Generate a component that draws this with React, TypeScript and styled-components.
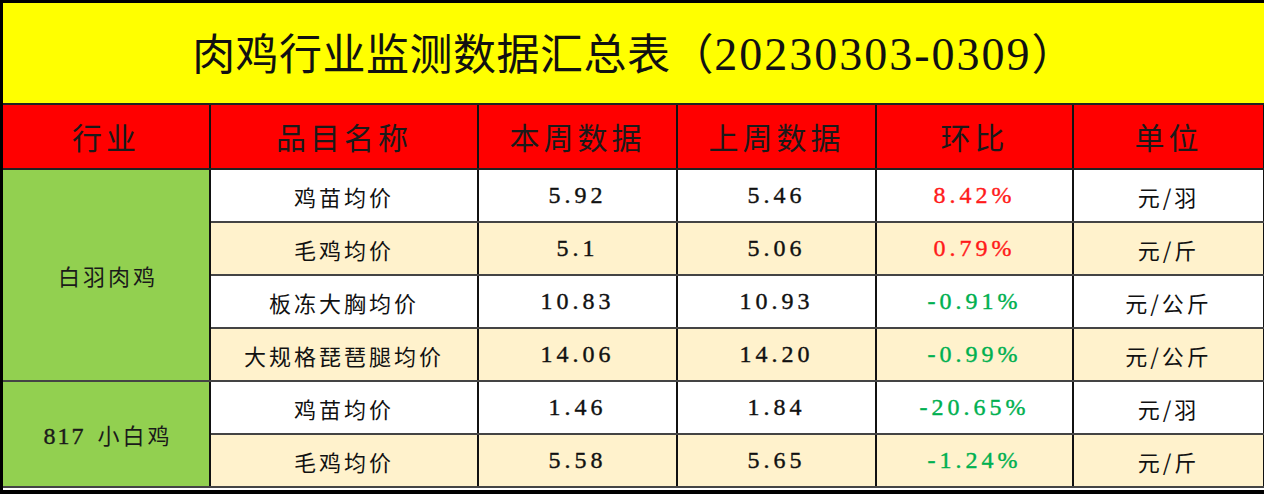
import styled, { createGlobalStyle } from "styled-components";

const GlobalStyle = createGlobalStyle`
  html, body {
    margin: 0;
    padding: 0;
    background: #ffffff;
  }
`;

const cjk = `"Noto Sans CJK SC", "Noto Sans", sans-serif`;
const num = `"Liberation Serif", "Noto Sans CJK SC", serif`;

const Sheet = styled.div`
  width: 1264px;
  height: 494px;
  box-sizing: border-box;
  border-top: 3px solid #000;
  border-left: 3px solid #000;
  border-bottom: 4px solid #000;
  overflow: hidden;
  background: #fff;
`;

const Table = styled.table`
  width: 1261px;
  border-collapse: collapse;
  table-layout: fixed;
`;

const TitleCell = styled.td`
  height: 96px;
  background: #ffff00;
  text-align: center;
  vertical-align: middle;
  font-family: ${cjk};
  font-size: 43px;
  font-weight: 400;
  color: #111;
  letter-spacing: 0.5px;
  padding: 0 0 4px 0;
  border-bottom: 2px solid #222;
`;

const TitleNum = styled.span`
  font-family: ${num};
  font-size: 46px;
  letter-spacing: 2px;
`;

const HeadCell = styled.th`
  height: 61px;
  background: #ff0000;
  font-family: ${cjk};
  font-size: 30px;
  font-weight: 400;
  letter-spacing: 4px;
  color: #1a1a1a;
  text-align: center;
  padding: 0 0 2px 0;
  border-right: 2px solid #111;
  border-bottom: 2px solid #222;
`;

const GroupCell = styled.td`
  background: #92d050;
  font-family: ${cjk};
  font-size: 22px;
  letter-spacing: 3px;
  color: #1a1a1a;
  text-align: center;
  padding: 0 0 0 4px;
  border-right: 2px solid #111;
  border-bottom: 2px solid #444;
`;

const GroupNum = styled.span`
  font-family: ${num};
  font-size: 24px;
  letter-spacing: 2px;
  margin-right: 12px;
  -webkit-text-stroke: 0.4px currentColor;
`;

const Cell = styled.td<{ $cream: boolean; $tone?: "up" | "down"; $num?: boolean }>`
  height: 51px;
  background: ${(p) => (p.$cream ? "#fff2cc" : "#ffffff")};
  font-family: ${(p) => (p.$num ? num : cjk)};
  font-size: ${(p) => (p.$num ? "24px" : "22px")};
  letter-spacing: ${(p) => (p.$num ? "4px" : "3px")};
  -webkit-text-stroke: ${(p) => (p.$num ? "0.4px currentColor" : "0")};
  color: ${(p) =>
    p.$tone === "up" ? "#ff1a1a" : p.$tone === "down" ? "#00b050" : "#111"};
  text-align: center;
  padding: 0;
  border-right: 2px solid #111;
  border-bottom: 2px solid #444;
`;

type Row = {
  name: string;
  cur: string;
  prev: string;
  change: string;
  unit: string;
};

const groups: { label: string; prefix?: string; rows: Row[] }[] = [
  {
    label: "白羽肉鸡",
    rows: [
      { name: "鸡苗均价", cur: "5.92", prev: "5.46", change: "8.42%", unit: "元/羽" },
      { name: "毛鸡均价", cur: "5.1", prev: "5.06", change: "0.79%", unit: "元/斤" },
      { name: "板冻大胸均价", cur: "10.83", prev: "10.93", change: "-0.91%", unit: "元/公斤" },
      { name: "大规格琵琶腿均价", cur: "14.06", prev: "14.20", change: "-0.99%", unit: "元/公斤" },
    ],
  },
  {
    label: "小白鸡",
    prefix: "817",
    rows: [
      { name: "鸡苗均价", cur: "1.46", prev: "1.84", change: "-20.65%", unit: "元/羽" },
      { name: "毛鸡均价", cur: "5.58", prev: "5.65", change: "-1.24%", unit: "元/斤" },
    ],
  },
];

const headers = ["行业", "品目名称", "本周数据", "上周数据", "环比", "单位"];
const widths = [207, 268, 199, 199, 197, 191];

export default function App() {
  let index = 0;
  return (
    <>
      <GlobalStyle />
      <Sheet>
        <Table>
          <colgroup>
            {widths.map((w, i) => (
              <col key={i} style={{ width: w }} />
            ))}
          </colgroup>
          <tbody>
            <tr>
              <TitleCell colSpan={6}>
                肉鸡行业监测数据汇总表（<TitleNum>20230303-0309</TitleNum>）
              </TitleCell>
            </tr>
            <tr>
              {headers.map((h) => (
                <HeadCell key={h}>{h}</HeadCell>
              ))}
            </tr>
            {groups.map((g) =>
              g.rows.map((r, i) => {
                const cream = index++ % 2 === 1;
                const tone = r.change.startsWith("-") ? "down" : "up";
                return (
                  <tr key={g.label + r.name}>
                    {i === 0 && (
                      <GroupCell rowSpan={g.rows.length}>
                        {g.prefix && <GroupNum>{g.prefix}</GroupNum>}
                        {g.label}
                      </GroupCell>
                    )}
                    <Cell $cream={cream}>{r.name}</Cell>
                    <Cell $cream={cream} $num>
                      {r.cur}
                    </Cell>
                    <Cell $cream={cream} $num>
                      {r.prev}
                    </Cell>
                    <Cell $cream={cream} $num $tone={tone}>
                      {r.change}
                    </Cell>
                    <Cell $cream={cream}>{r.unit}</Cell>
                  </tr>
                );
              })
            )}
          </tbody>
        </Table>
      </Sheet>
    </>
  );
}
